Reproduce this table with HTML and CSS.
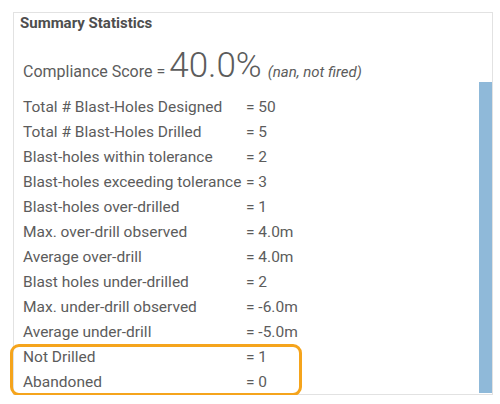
FILE: index.html
```html
<!DOCTYPE html>
<html lang="en">
<head>
    <meta charset="UTF-8">
    <title>Summary Statistics</title>
    <link rel="stylesheet" href="styles.css">
</head>
<body>
    <div class="panel">
        <div class="panel-body">
            <h3 class="panel-title">Summary Statistics</h3>
            <div class="score">
                <span class="score-label">Compliance Score =</span>
                <span class="score-value">40.0%</span>
                <span class="score-note">(nan, not fired)</span>
            </div>
            <div class="stats">
                <div class="stat-row"><span class="stat-label">Total # Blast-Holes Designed</span><span class="stat-value">= 50</span></div>
                <div class="stat-row"><span class="stat-label">Total # Blast-Holes Drilled</span><span class="stat-value">= 5</span></div>
                <div class="stat-row"><span class="stat-label">Blast-holes within tolerance</span><span class="stat-value">= 2</span></div>
                <div class="stat-row"><span class="stat-label">Blast-holes exceeding tolerance</span><span class="stat-value">= 3</span></div>
                <div class="stat-row"><span class="stat-label">Blast-holes over-drilled</span><span class="stat-value">= 1</span></div>
                <div class="stat-row"><span class="stat-label">Max. over-drill observed</span><span class="stat-value">= 4.0m</span></div>
                <div class="stat-row"><span class="stat-label">Average over-drill</span><span class="stat-value">= 4.0m</span></div>
                <div class="stat-row"><span class="stat-label">Blast holes under-drilled</span><span class="stat-value">= 2</span></div>
                <div class="stat-row"><span class="stat-label">Max. under-drill observed</span><span class="stat-value">= -6.0m</span></div>
                <div class="stat-row"><span class="stat-label">Average under-drill</span><span class="stat-value">= -5.0m</span></div>
                <div class="highlight">
                    <div class="stat-row"><span class="stat-label">Not Drilled</span><span class="stat-value">= 1</span></div>
                    <div class="stat-row"><span class="stat-label">Abandoned</span><span class="stat-value">= 0</span></div>
                </div>
            </div>
        </div>
        <div class="scroll-bar"></div>
    </div>
</body>
</html>
```

FILE: styles.css
```css
body {
    margin: 0;
    background: #ffffff;
    font-family: Roboto, "Liberation Sans", Arial, sans-serif;
    color: #5c5c5c;
}
.panel {
    display: flex;
    margin: 12px 0 0 13px;
    width: 480px;
    height: 383px;
    box-sizing: border-box;
    border: 1px solid #e2e2e2;
}
.panel-body {
    flex: 1;
    padding-left: 6px;
}
.panel-title {
    margin: 0;
    padding-top: 2px;
    font-size: 15px;
    line-height: 17px;
    font-weight: bold;
    color: #4e4e4e;
}
.score {
    display: flex;
    align-items: baseline;
    margin-top: 16px;
    padding-left: 3px;
    height: 47px;
}
.score-label {
    font-size: 16px;
}
.score-value {
    font-size: 35px;
    font-weight: 300;
    line-height: 1;
    margin-left: 4px;
}
.score-note {
    font-size: 15px;
    font-style: italic;
    margin-left: 6px;
}
.stats {
    padding-left: 3px;
}
.stat-row {
    display: flex;
    font-size: 15.5px;
    line-height: 25px;
}
.stat-label {
    width: 223px;
}
.highlight {
    margin-left: -12px;
    padding-left: 12px;
    width: 278px;
    border-radius: 8px;
    outline: 3px solid #f5a41c;
    outline-offset: -2px;
}
.scroll-bar {
    width: 13px;
    margin-top: 69px;
    margin-bottom: 1px;
    background: #8fb9d9;
}
```
